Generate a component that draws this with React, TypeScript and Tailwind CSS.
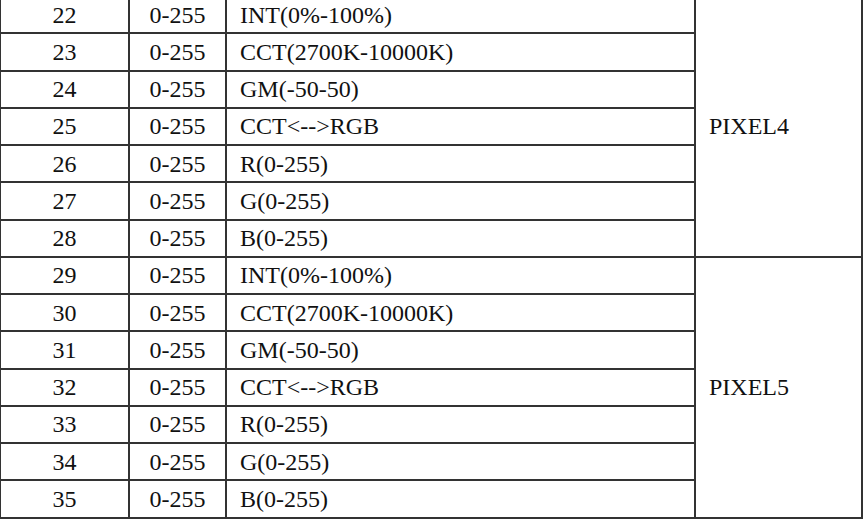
const groups = [
  { label: 'PIXEL4', start: 22 },
  { label: 'PIXEL5', start: 29 },
];

const functions = [
  'INT(0%-100%)',
  'CCT(2700K-10000K)',
  'GM(-50-50)',
  'CCT<-->RGB',
  'R(0-255)',
  'G(0-255)',
  'B(0-255)',
];

const cell = 'border-2 border-[#333] h-[37.25px] p-0 align-middle';

export default function App() {
  return (
    <div className="h-[521px] w-[864px] overflow-hidden bg-white">
      <table
        className="-mt-[5px] -ml-[1px] w-[862px] table-fixed border-collapse text-[24px] leading-none text-[#111]"
        style={{ fontFamily: '"Liberation Serif", "Times New Roman", serif' }}
      >
        <colgroup>
          <col className="w-[129px]" />
          <col className="w-[97px]" />
          <col className="w-[469px]" />
          <col className="w-[167px]" />
        </colgroup>
        <tbody>
          {groups.map((group) =>
            functions.map((fn, i) => (
              <tr key={`${group.label}-${i}`}>
                <td className={`${cell} text-center`}>{group.start + i}</td>
                <td className={`${cell} text-center`}>0-255</td>
                <td className={`${cell} pl-[13px] text-left`}>{fn}</td>
                {i === 0 && (
                  <td rowSpan={7} className={`${cell} pl-[13px] text-left`}>
                    {group.label}
                  </td>
                )}
              </tr>
            )),
          )}
        </tbody>
      </table>
    </div>
  );
}
